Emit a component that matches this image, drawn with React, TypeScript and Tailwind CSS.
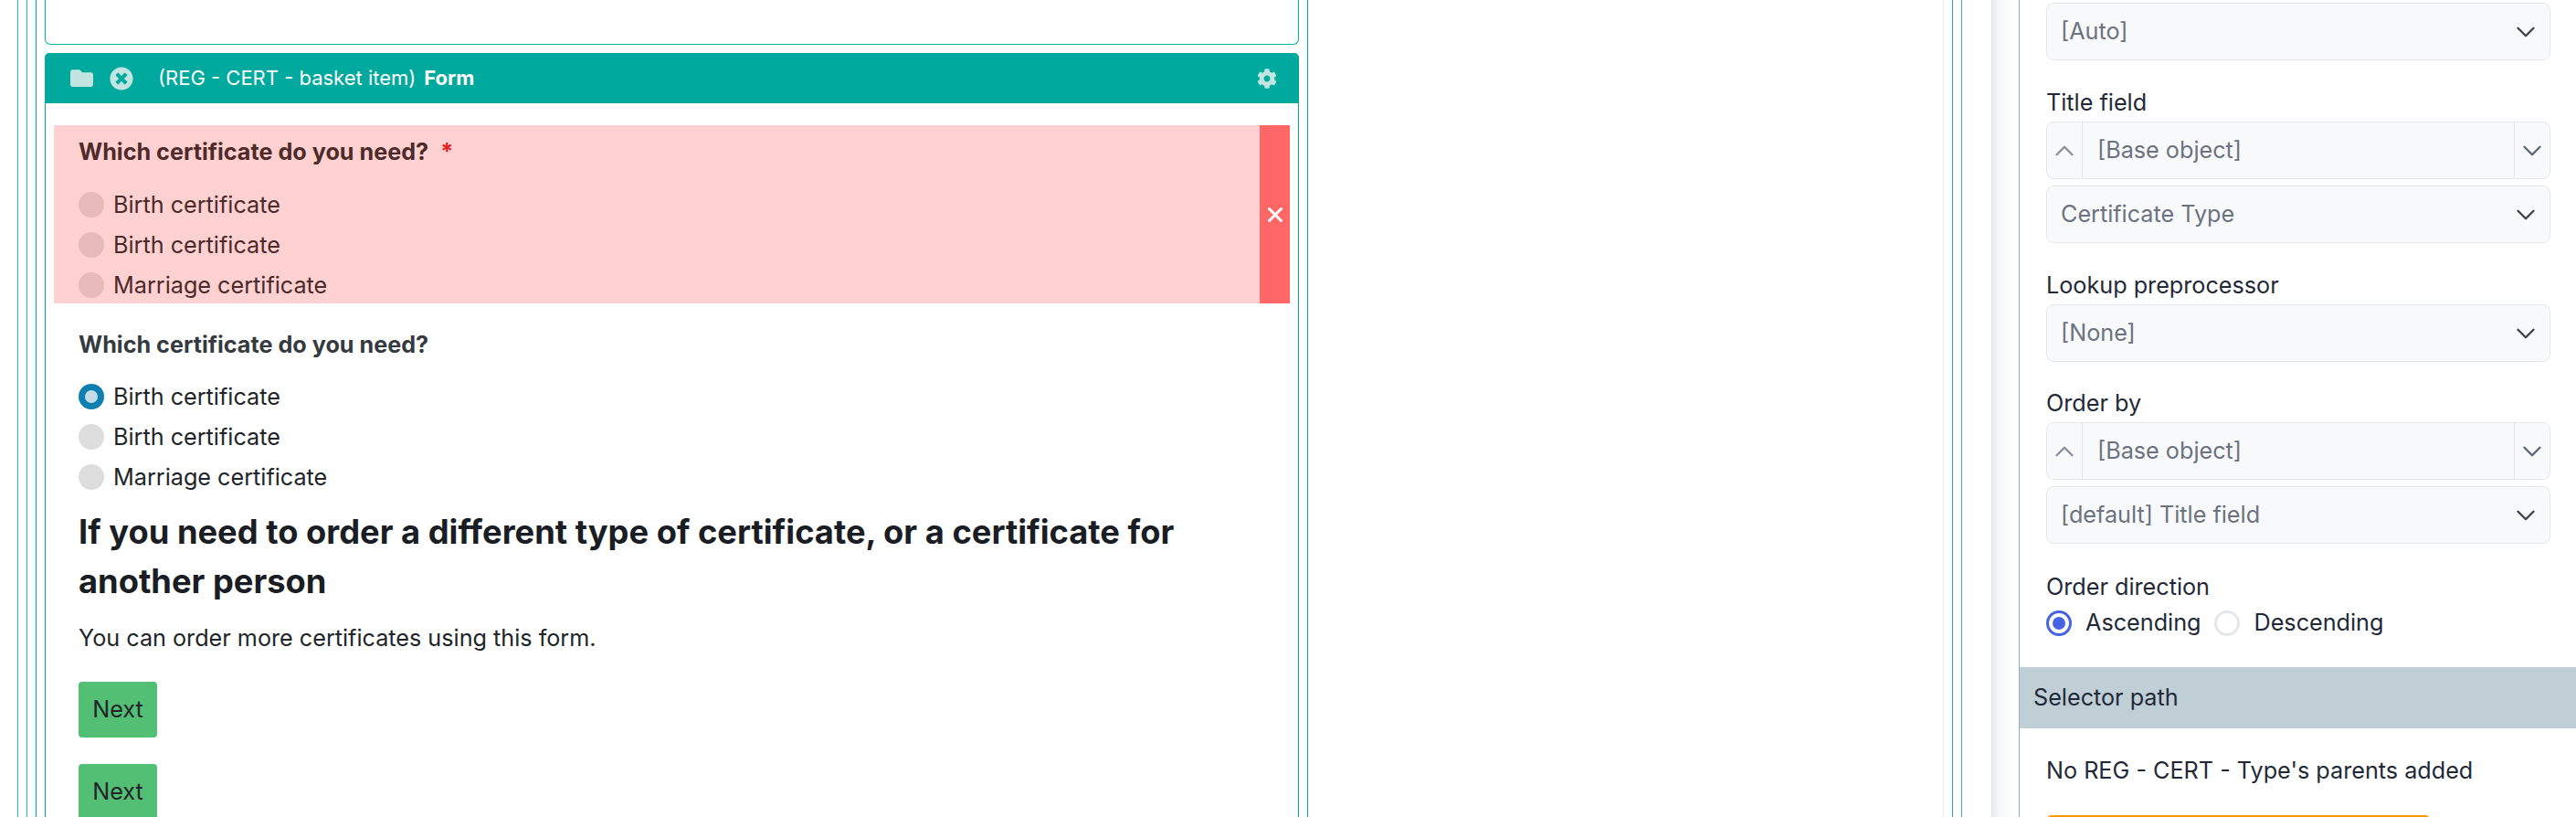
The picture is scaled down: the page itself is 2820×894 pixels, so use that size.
import { ChevronDown, ChevronUp, X } from "lucide-react";
import { FaCog, FaFolder, FaTimesCircle } from "react-icons/fa";

const options = ["Birth certificate", "Birth certificate", "Marriage certificate"];

function RadioList({ error }: { error?: boolean }) {
  return (
    <div className="flex flex-col gap-[16px]">
      {options.map((label, i) => (
        <div key={i} className="flex h-[28px] items-center gap-[10px] text-[25.2px] leading-[28px] text-[#212529]">
          {!error && i === 0 ? (
            <span className="flex h-[28px] w-[28px] items-center justify-center rounded-full bg-[#0f7fb0]">
              <span className="h-[14px] w-[14px] rounded-full bg-[#c4dbe8]" />
            </span>
          ) : (
            <span className={`h-[28px] w-[28px] rounded-full ${error ? "bg-[#e8b9b9]" : "bg-[#dddddd]"}`} />
          )}
          <span className={error ? "text-[#4a2a2a]" : ""}>{label}</span>
        </div>
      ))}
    </div>
  );
}

function NextButton() {
  return (
    <button className="flex h-[61px] w-[86px] items-center justify-center rounded-[4px] bg-[#52bf75] text-[25.2px] text-[#212529]">
      Next
    </button>
  );
}

function FormCard() {
  return (
    <div className="mt-[9px] flex flex-col">
      <div className="flex h-[55px] items-center rounded-t-[5px] bg-[#00a99d] pl-[28px] pr-[24px] text-[22px] text-white">
        <FaFolder className="h-[25px] w-[25px] text-[#c2e5e2]" />
        <FaTimesCircle className="ml-[18px] h-[26px] w-[26px] text-[#c2e5e2]" />
        <span className="ml-[27px]">(REG - CERT - basket item)</span>
        <span className="ml-[9px] font-bold">Form</span>
        <FaCog className="ml-auto h-[22px] w-[22px] text-[#c2e5e2]" />
      </div>
      <div className="flex flex-col border-x border-[#00a99d] px-[9px] pt-[24px]">
        <div className="flex h-[195px] bg-[#ffd1d1]">
          <div className="flex-1 pl-[27px] pt-[16px]">
            <div className="mb-[29px] flex h-[28px] items-center text-[25.2px] font-bold text-[#4e2a2a]">
              Which certificate do you need?
              <span className="ml-[13px] text-[#e02424]">*</span>
            </div>
            <RadioList error />
          </div>
          <div className="flex w-[33px] items-center justify-center bg-[#ff6666]">
            <X className="h-[26px] w-[26px] text-white" strokeWidth={2.8} />
          </div>
        </div>
        <div className="pl-[27px]">
          <div className="mb-[28px] mt-[32px] flex h-[28px] items-center text-[25.2px] font-bold text-[#343a40]">
            Which certificate do you need?
          </div>
          <RadioList />
          <h2 className="mt-[19px] max-w-[1260px] text-[36.3px] font-bold leading-[54px] text-[#1a1e24]">
            If you need to order a different type of certificate, or a certificate for another person
          </h2>
          <p className="mt-[17px] text-[25.2px] leading-[36px] text-[#212529]">You can order more certificates using this form.</p>
          <div className="mt-[30px] flex flex-col gap-[29px]">
            <NextButton />
            <NextButton />
          </div>
        </div>
      </div>
    </div>
  );
}

function Select({ value }: { value: string }) {
  return (
    <div className="flex h-[63px] items-center justify-between rounded-[8px] border border-[#e5e7eb] bg-[#f8f9fa] pl-[15px] pr-[9px] text-[25.2px] text-[#6b7280]">
      {value}
      <ChevronDown className="h-[34px] w-[34px] text-[#3f4450]" strokeWidth={1.7} />
    </div>
  );
}

function ComboSelect() {
  return (
    <div className="flex h-[63px] items-stretch rounded-[8px] border border-[#e5e7eb] bg-[#f8f9fa] text-[25.2px] text-[#6b7280]">
      <div className="flex w-[39px] items-center justify-center border-r border-[#e5e7eb]">
        <ChevronUp className="h-[34px] w-[34px] text-[#8a909c]" strokeWidth={1.7} />
      </div>
      <div className="flex flex-1 items-center pl-[16px]">[Base object]</div>
      <div className="flex w-[39px] items-center justify-center border-l border-[#e5e7eb]">
        <ChevronDown className="h-[34px] w-[34px] text-[#5f6675]" strokeWidth={1.7} />
      </div>
    </div>
  );
}

function FieldLabel({ children }: { children: string }) {
  return <div className="flex h-[30px] items-center text-[25.2px] text-[#1f2937]">{children}</div>;
}

function SidePanel() {
  return (
    <div className="ml-[32px] flex min-w-0 flex-1">
      <div className="w-[30px] shrink-0 bg-[linear-gradient(to_right,#e6e8ea,#f6f7f8_25%,#ffffff)]" />
      <div className="flex-1 border-l border-[#8fb3c4] bg-white">
        <div className="flex flex-col pl-[29px] pr-[28px] pt-[3px]">
          <Select value="[Auto]" />
          <div className="mb-[5px] mt-[32px]">
            <FieldLabel>Title field</FieldLabel>
          </div>
          <ComboSelect />
          <div className="mt-[7px]">
            <Select value="Certificate Type" />
          </div>
          <div className="mb-[5px] mt-[32px]">
            <FieldLabel>Lookup preprocessor</FieldLabel>
          </div>
          <Select value="[None]" />
          <div className="mb-[5px] mt-[31px]">
            <FieldLabel>Order by</FieldLabel>
          </div>
          <ComboSelect />
          <div className="mt-[7px]">
            <Select value="[default] Title field" />
          </div>
          <div className="mb-[10px] mt-[33px]">
            <FieldLabel>Order direction</FieldLabel>
          </div>
          <div className="flex h-[28px] items-center text-[25.2px] text-[#1f2937]">
            <span className="flex h-[28px] w-[28px] items-center justify-center rounded-full border-[3px] border-[#4763e4]">
              <span className="h-[14px] w-[14px] rounded-full bg-[#4763e4]" />
            </span>
            <span className="ml-[15px]">Ascending</span>
            <span className="ml-[15px] h-[28px] w-[28px] rounded-full border-[3px] border-[#e5e7eb]" />
            <span className="ml-[15px]">Descending</span>
          </div>
        </div>
        <div className="mt-[34px] flex h-[67px] items-center bg-[#c0ced5] pl-[15px] text-[25.2px] text-[#1f2937]">Selector path</div>
        <div className="pl-[29px]">
          <div className="mt-[32px] flex h-[30px] items-center text-[25.2px] text-[#1f2937]">No REG - CERT - Type's parents added</div>
          <div className="mt-[33px] h-[40px] w-[421px] rounded-[6px] bg-[#ff9800]" />
        </div>
      </div>
    </div>
  );
}

export default function App() {
  return (
    <div className="flex h-[894px] w-[2820px] overflow-hidden bg-white font-['Inter',sans-serif]">
      <div className="ml-[19px] w-[2129px] shrink-0 border-x border-[#38a9d4] pl-[9px] pr-[9px]">
        <div className="flex h-full border-l border-r border-l-[#3ba3c4] border-r-[#2aa8a0] pl-[9px] pr-[9px]">
          <div className="h-full w-[1393px] shrink-0 border-x border-[#00a99d] pl-[9px] pr-[9px]">
            <div className="h-[49px] rounded-b-[6px] border-x border-b border-[#00b5a8]" />
            <FormCard />
          </div>
          <div className="flex-1 border-r border-[#eeeeee]" />
        </div>
      </div>
      <SidePanel />
    </div>
  );
}
